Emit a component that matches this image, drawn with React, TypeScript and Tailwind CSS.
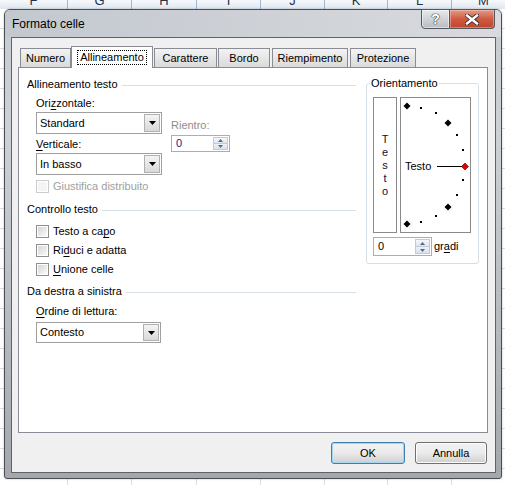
import React from "react";

const FONT = "font-['Liberation_Sans',Arial,sans-serif]";

function Tri({ down = true, color = "#000", w = 7, h = 4 }: { down?: boolean; color?: string; w?: number; h?: number }) {
  return (
    <svg width={w} height={h} viewBox={`0 0 ${w} ${h}`} className="block">
      {down ? (
        <polygon points={`0,0 ${w},0 ${w / 2},${h}`} fill={color} />
      ) : (
        <polygon points={`0,${h} ${w},${h} ${w / 2},0`} fill={color} />
      )}
    </svg>
  );
}

function Select({ value, className }: { value: string; className: string }) {
  return (
    <div className={"flex bg-white border border-[#a0a0a0] " + className}>
      <div className="flex-1 flex items-center pl-[3px] text-[11px] text-black">{value}</div>
      <div className="w-[16px] my-[1px] mr-[1px] border border-[#b0b0b0] bg-linear-to-b from-[#f4f4f4] to-[#d9d9d9] flex items-center justify-center">
        <Tri />
      </div>
    </div>
  );
}

function Spinner({ value, className, textColor }: { value: string; className: string; textColor: string }) {
  return (
    <div className={"flex bg-white border border-[#abadb3] " + className}>
      <div className={"flex-1 flex items-center pl-[4px] text-[11px] " + textColor}>{value}</div>
      <div className="w-[16px] flex flex-col py-[1px] pr-[1px] gap-0">
        <div className="flex-1 border border-[#c3cad4] bg-linear-to-b from-[#f6f8fb] to-[#dfe6ef] flex items-center justify-center">
          <Tri down={false} color="#56688a" w={5} h={3} />
        </div>
        <div className="flex-1 border border-[#c3cad4] border-t-0 bg-linear-to-b from-[#eef2f7] to-[#d9e1ec] flex items-center justify-center">
          <Tri color="#56688a" w={5} h={3} />
        </div>
      </div>
    </div>
  );
}

function Check({ disabled = false }: { disabled?: boolean }) {
  return (
    <div
      className={
        "w-[13px] h-[13px] border bg-white p-[1px] shrink-0 " +
        (disabled ? "border-[#cccccc]" : "border-[#8e8f8f]")
      }
    >
      <div
        className={
          "w-full h-full " +
          (disabled ? "bg-[#f4f4f4]" : "bg-linear-to-br from-[#d6d6d6] via-[#e8e8e8] to-[#fafafa]")
        }
      />
    </div>
  );
}

function Heading({ children }: { children: React.ReactNode }) {
  return (
    <div className="flex items-center h-[15px] pl-[8px] pr-[10px] text-[11px] leading-[15px] text-black">
      <span className="whitespace-nowrap">{children}</span>
      <div className="flex-1 h-px bg-[#d5dfe5] ml-[4px] mt-[1px]" />
    </div>
  );
}

function U({ children }: { children: React.ReactNode }) {
  return <span className="underline underline-offset-[2px]">{children}</span>;
}

function Diamond({ x, y, r = 3.5, fill = "#000" }: { x: number; y: number; r?: number; fill?: string }) {
  return (
    <polygon
      points={`${x},${y - r} ${x + r},${y} ${x},${y + r} ${x - r},${y}`}
      fill={fill}
      stroke={fill === "#000" ? "none" : "#400"}
      strokeWidth={fill === "#000" ? 0 : 0.6}
    />
  );
}

function Dial() {
  const dots: [number, number][] = [
    [21, 11],
    [36, 16],
    [57, 38],
    [63, 53],
    [63, 83],
    [57, 98],
    [36, 119],
    [21, 125],
  ];
  return (
    <div className="relative w-[71px] h-[136px] border border-[#8a8a8a] bg-white">
      <svg width="69" height="134" viewBox="1 1 69 134" className="absolute left-0 top-0">
        <Diamond x={7} y={9} />
        <Diamond x={48} y={26} />
        <Diamond x={48} y={110} />
        <Diamond x={7} y={127} />
        {dots.map(([x, y], i) => (
          <rect key={i} x={x - 1} y={y - 1} width={2} height={2} fill="#000" />
        ))}
        <line x1={37} y1={69.5} x2={62} y2={69.5} stroke="#000" strokeWidth={1} />
        <Diamond x={65} y={69.5} r={3.5} fill="#e00000" />
      </svg>
      <div className="absolute left-[4px] top-[61px] text-[11px] leading-[15px] text-black">Testo</div>
    </div>
  );
}

const TAB = "h-[19px] border border-b-0 border-[#898c95] bg-linear-to-b from-[#f3f3f3] to-[#dadada] flex items-center justify-center text-[11px] text-black";

export default function App() {
  const cols = ["F", "G", "H", "I", "J", "K", "L", "M"];
  const colW = ["w-[68px]", "w-[64px]", "w-[65px]", "w-[64px]", "w-[64px]", "w-[63px]", "w-[64px]", "w-[64px]"];
  return (
    <div className={"relative w-[505px] h-[485px] overflow-hidden bg-white " + FONT}>
      {/* Excel background */}
      <div className="flex h-[9px] overflow-hidden bg-linear-to-b from-[#f7f9fc] to-[#dfe6ef]">
        {cols.map((c, i) => (
          <div key={c} className={"relative shrink-0 h-full border-r border-[#9eb6ce] " + colW[i]}>
            <div className="absolute left-0 right-0 top-[-6px] text-center text-[13px] leading-[13px] text-[#1f3350]">{c}</div>
          </div>
        ))}
      </div>
      <div className="flex flex-col">
        {Array.from({ length: 24 }).map((_, i) => (
          <div key={i} className="h-[20px] border-b border-[#dadcdd] flex">
            {colW.map((w, j) => (
              <div key={j} className={"shrink-0 h-full border-r border-[#dadcdd] " + w} />
            ))}
          </div>
        ))}
      </div>

      {/* Dialog window */}
      <div className="absolute left-[4px] top-[9px] w-[498px] h-[470px] flex flex-col border border-[#4a4d52] rounded-t-[6px] rounded-b-[3px] bg-linear-to-b from-[#c6cbd1] via-[#cdd1d6] via-27% to-[#a4a8ad] shadow-[0_0_2px_rgba(0,0,0,0.3)]">
        {/* title bar */}
        <div className="h-[27px] shrink-0 flex items-center pl-[7px] rounded-t-[5px] bg-linear-to-r from-[#c3c8cf] to-[#d8dade]">
          <span className="text-[12px] text-black mt-[1px]">Formato celle</span>
        </div>
        {/* caption buttons */}
        <div className="absolute left-[416px] top-[-1px] flex h-[20px]">
          <div className="w-[29px] h-full border border-[#54575c] rounded-bl-[4px] bg-linear-to-b from-[#e7e9ec] via-[#cfd3d8] to-[#b8bdc4] flex items-center justify-center shadow-[inset_0_0_0_1px_rgba(255,255,255,0.5)]">
            <span className="text-[14px] font-bold text-white leading-none [text-shadow:0_0_1px_#333,0_0_1px_#333,0_0_1px_#333]">?</span>
          </div>
          <div className="w-[45px] h-full border border-l-0 border-[#54575c] rounded-br-[4px] bg-linear-to-b from-[#e29a88] via-[#cf5a41] to-[#c0442a] flex items-center justify-center shadow-[inset_0_0_0_1px_rgba(255,220,210,0.4)]">
            <svg width="14" height="11" viewBox="0 0 14 11">
              <path d="M2 1.5 L12 9.5 M12 1.5 L2 9.5" stroke="#3a2a28" strokeWidth="4.2" strokeLinecap="square" />
              <path d="M2 1.5 L12 9.5 M12 1.5 L2 9.5" stroke="#fff" strokeWidth="2.4" strokeLinecap="square" />
            </svg>
          </div>
        </div>

        {/* client area */}
        <div className="ml-[6px] w-[485px] h-[436px] shrink-0 border border-[#5f6368] bg-[#f0f0f0] flex flex-col pt-[8px] pl-[6px]">
          {/* tabs */}
          <div className="flex items-end h-[21px] shrink-0">
            <div className={TAB + " ml-[2px] w-[51px]"}>Numero</div>
            <div className="relative z-10 w-[82px] h-[22px] -mb-px border border-b-0 border-[#898c95] bg-white flex items-center justify-center text-[11px] text-black">
              <span className="border border-dotted border-black px-[2px] leading-[13px]">Allineamento</span>
            </div>
            <div className={TAB + " ml-px w-[63px]"}>Carattere</div>
            <div className={TAB + " ml-px w-[52px]"}>Bordo</div>
            <div className={TAB + " ml-[2px] w-[76px]"}>Riempimento</div>
            <div className={TAB + " ml-[2px] w-[66px]"}>Protezione</div>
          </div>

          {/* panel */}
          <div className="w-[470px] h-[366px] shrink-0 border border-[#898c95] bg-white flex">
            {/* left column */}
            <div className="w-[347px] shrink-0 flex flex-col text-[11px] text-black">
              <div className="mt-[9px]">
                <Heading>Allineamento testo</Heading>
              </div>
              <div className="pl-[17px] flex">
                <div className="w-[126px] flex flex-col">
                  <div className="mt-[4px] h-[15px] leading-[15px]">
                    Ori<U>z</U>zontale:
                  </div>
                  <Select value="Standard" className="mt-[1px] h-[22px] w-[126px]" />
                  <div className="mt-[3px] h-[15px] leading-[15px]">
                    <U>V</U>erticale:
                  </div>
                  <Select value="In basso" className="mt-[1px] h-[22px] w-[126px]" />
                  <div className="mt-[5px] h-[13px] flex items-center gap-[4px]">
                    <Check disabled />
                    <span className="leading-[13px] text-[#a0a0a0] whitespace-nowrap">Giustifica distribuito</span>
                  </div>
                </div>
                <div className="ml-[9px] flex flex-col">
                  <div className="mt-[26px] h-[15px] leading-[15px] text-[#8d8d8d]">Rientro:</div>
                  <Spinner value="0" className="mt-[2px] h-[17px] w-[59px]" textColor="text-[#1a1a80]" />
                </div>
              </div>

              <div className="mt-[9px]">
                <Heading>Controllo testo</Heading>
              </div>
              <div className="pl-[17px] flex flex-col">
                <div className="mt-[8px] h-[13px] flex items-center gap-[4px]">
                  <Check />
                  <span className="leading-[13px]">
                    Testo a ca<U>p</U>o
                  </span>
                </div>
                <div className="mt-[6px] h-[13px] flex items-center gap-[4px]">
                  <Check />
                  <span className="leading-[13px]">
                    Ri<U>d</U>uci e adatta
                  </span>
                </div>
                <div className="mt-[6px] h-[13px] flex items-center gap-[4px]">
                  <Check />
                  <span className="leading-[13px]">
                    <U>U</U>nione celle
                  </span>
                </div>
              </div>

              <div className="mt-[8px]">
                <Heading>Da destra a sinistra</Heading>
              </div>
              <div className="pl-[17px] flex flex-col">
                <div className="mt-[5px] h-[15px] leading-[15px]">
                  <U>O</U>rdine di lettura:
                </div>
                <Select value="Contesto" className="mt-[3px] h-[21px] w-[125px]" />
              </div>
            </div>

            {/* Orientamento group */}
            <div className="relative mt-[15px] w-[113px] h-[181px] shrink-0 border border-[#d5dfe5] rounded-[3px] flex flex-col pt-[13px] pl-[6px] text-[11px] text-black">
              <div className="absolute left-[3px] top-[-8px] bg-white px-px leading-[15px]">Orientamento</div>
              <div className="flex gap-[3px]">
                <div className="w-[24px] h-[136px] border border-[#8a8a8a] bg-white flex flex-col items-center justify-center leading-[13px] text-[11px] text-[#101030]">
                  <span>T</span>
                  <span>e</span>
                  <span>s</span>
                  <span>t</span>
                  <span>o</span>
                </div>
                <Dial />
              </div>
              <div className="mt-[4px] flex items-center gap-[2px]">
                <Spinner value="0" className="h-[19px] w-[59px]" textColor="text-black" />
                <span className="leading-[15px]">
                  gr<U>a</U>di
                </span>
              </div>
            </div>
          </div>

          {/* buttons */}
          <div className="mt-[9px] flex justify-end pr-[8px] gap-[10px]">
            <div className="w-[74px] h-[22px] rounded-[3px] border border-[#3c7fb1] bg-linear-to-b from-[#f2f2f2] via-[#ebebeb] to-[#cfcfcf] shadow-[inset_0_0_0_1px_#a7d4f1] flex items-center justify-center text-[11px] text-black">
              OK
            </div>
            <div className="w-[72px] h-[22px] rounded-[3px] border border-[#707070] bg-linear-to-b from-[#f2f2f2] via-[#ebebeb] to-[#cfcfcf] shadow-[inset_0_0_0_1px_#fcfcfc] flex items-center justify-center text-[11px] text-black">
              Annulla
            </div>
          </div>
        </div>
      </div>
    </div>
  );
}
